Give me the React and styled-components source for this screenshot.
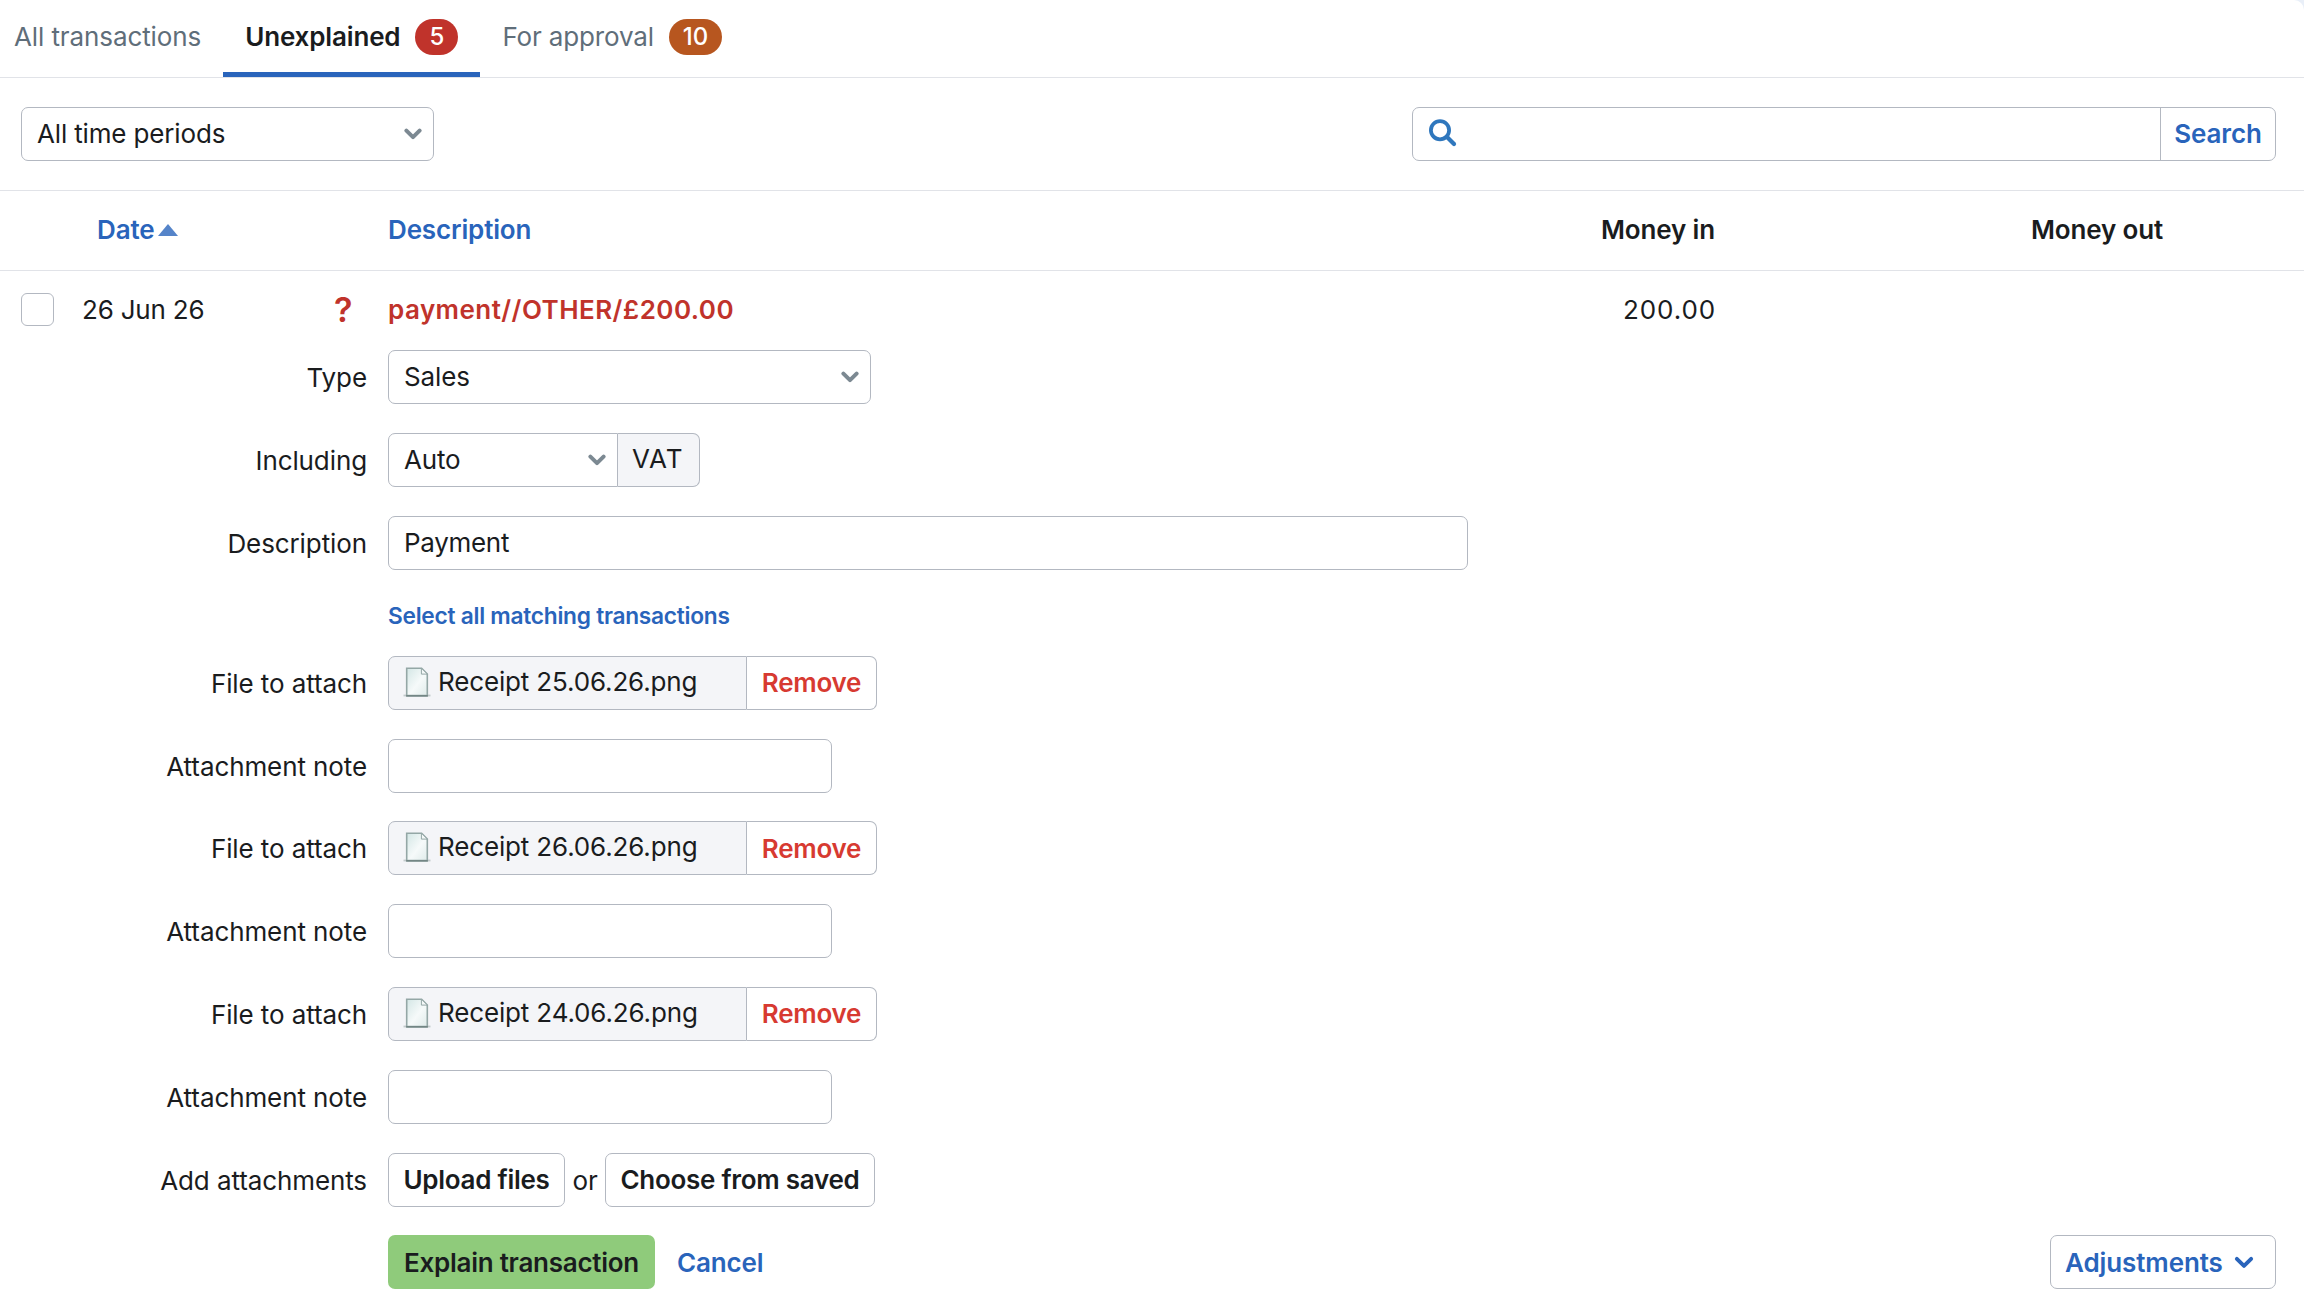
import React from "react";
import styled, { createGlobalStyle } from "styled-components";

const colors = {
  text: "#1a1c1e",
  muted: "#5f6e7a",
  link: "#2964bb",
  danger: "#c0332b",
  remove: "#d73a31",
  amber: "#b7561f",
  green: "#8fcb7b",
  border: "#b3b8c1",
  line: "#e1e3e8",
  fill: "#f4f5f8",
};

const receipts = [
  "Receipt 25.06.26.png",
  "Receipt 26.06.26.png",
  "Receipt 24.06.26.png",
];

const Chevron = ({ color, width = 18, height = 12, stroke = 4 }) => (
  <svg width={width} height={height} viewBox="0 0 18 12" fill="none">
    <path
      d="M2.4 2.6 9 9.1l6.6-6.5"
      stroke={color}
      strokeWidth={stroke}
      strokeLinecap="round"
      strokeLinejoin="round"
    />
  </svg>
);

const SearchIcon = () => (
  <svg width="28" height="28" viewBox="0 0 28 28" fill="none">
    <circle cx="11" cy="11.2" r="9.1" stroke="#2f77bd" strokeWidth="3.8" />
    <path
      d="M18 18l7 7"
      stroke="#2f77bd"
      strokeWidth="4.2"
      strokeLinecap="round"
    />
  </svg>
);

const FileIcon = () => (
  <svg width="28" height="32" viewBox="0 0 28 32">
    <defs>
      <linearGradient id="page" x1="0" y1="0" x2="1" y2="1">
        <stop offset="0" stopColor="#d3e6e5" />
        <stop offset="0.55" stopColor="#f6fafa" />
        <stop offset="1" stopColor="#dfebea" />
      </linearGradient>
    </defs>
    <path d="M0.5 27.6h27v1.8h-27z" fill="#c3cbcc" />
    <path
      d="M3.7 1.2h14.9l5.7 5.8v21.6H3.7z"
      fill="url(#page)"
      stroke="#94a7a6"
      strokeWidth="1.6"
    />
    <path d="M18.4 1.2v5.9h5.9z" fill="#f4f8f8" stroke="#94a7a6" />
    <path d="M3.2 28.8h21.6" stroke="#738685" strokeWidth="1.6" />
  </svg>
);

const AttachmentFields = ({ name }) => (
  <>
    <FormRow>
      <Label>File to attach</Label>
      <Group>
        <FileName>
          <FileIcon />
          <span>{name}</span>
        </FileName>
        <RemoveButton>Remove</RemoveButton>
      </Group>
    </FormRow>
    <FormRow>
      <Label>Attachment note</Label>
      <Input $width={444} aria-label="Attachment note" />
    </FormRow>
  </>
);

const App = () => {
  return (
    <>
      <GlobalStyle />
      <Page>
        <Tabs>
          <Tab>All transactions</Tab>
          <Tab $active>
            Unexplained
            <Badge $color={colors.danger} $width={43}>
              5
            </Badge>
          </Tab>
          <Tab>
            For approval
            <Badge $color={colors.amber} $width={53}>
              10
            </Badge>
          </Tab>
        </Tabs>

        <Toolbar>
          <Select $width={413}>
            All time periods
            <Chevron color="#7c8992" />
          </Select>
          <SearchBox>
            <SearchField>
              <SearchIcon />
              <input aria-label="Search transactions" />
            </SearchField>
            <SearchButton>Search</SearchButton>
          </SearchBox>
        </Toolbar>

        <TableHead>
          <SortLink>
            Date
            <SortArrow width="20" height="12" viewBox="0 0 20 12">
              <path d="M10 0l10 12H0z" fill="#5584c9" />
            </SortArrow>
          </SortLink>
          <SortLink>Description</SortLink>
          <Amount>Money in</Amount>
          <Amount>Money out</Amount>
        </TableHead>

        <TransactionRow>
          <Checkbox />
          <DateCell>26 Jun 26</DateCell>
          <Unknown>?</Unknown>
          <Title>payment//OTHER/£200.00</Title>
          <MoneyIn>200.00</MoneyIn>
        </TransactionRow>

        <Form>
          <FormRow>
            <Label>Type</Label>
            <Select $width={483}>
              Sales
              <Chevron color="#7c8992" />
            </Select>
          </FormRow>
          <FormRow>
            <Label>Including</Label>
            <Group>
              <Select $width={230} $joined>
                Auto
                <Chevron color="#7c8992" />
              </Select>
              <Addon>VAT</Addon>
            </Group>
          </FormRow>
          <FormRow>
            <Label>Description</Label>
            <Input
              $width={1080}
              defaultValue="Payment"
              aria-label="Description"
            />
          </FormRow>

          <MatchingLink>Select all matching transactions</MatchingLink>

          {receipts.map((name) => (
            <AttachmentFields key={name} name={name} />
          ))}

          <FormRow>
            <Label>Add attachments</Label>
            <Button $width={177}>Upload files</Button>
            <Or>or</Or>
            <Button $width={270}>Choose from saved</Button>
          </FormRow>

          <Actions>
            <PrimaryButton>Explain transaction</PrimaryButton>
            <CancelLink>Cancel</CancelLink>
            <Adjustments>
              Adjustments
              <Chevron color={colors.link} width={20} height={13} stroke={3.6} />
            </Adjustments>
          </Actions>
        </Form>
      </Page>
    </>
  );
};

const GlobalStyle = createGlobalStyle`
  *, *::before, *::after {
    box-sizing: border-box;
  }

  body {
    margin: 0;
    background: #e9eff8;
    color: ${colors.text};
    font-family: "Inter", "Liberation Sans", sans-serif;
    font-size: 26px;
    line-height: 32px;
    letter-spacing: -0.15px;
    overflow: hidden;
  }

  svg {
    display: block;
    flex-shrink: 0;
  }

  button, input {
    font: inherit;
    letter-spacing: inherit;
    color: inherit;
  }
`;

const Page = styled.main`
  height: 1312px;
  background: #fff;
  border-radius: 0 10px 0 0;
`;

const Tabs = styled.nav`
  display: flex;
  height: 78px;
  border-bottom: 1px solid ${colors.line};
`;

const Tab = styled.a`
  display: flex;
  align-items: center;
  gap: 15px;
  padding: 2px 22px 0;
  border-bottom: 5px solid
    ${(props) => (props.$active ? colors.link : "transparent")};
  color: ${(props) => (props.$active ? colors.text : colors.muted)};
  font-weight: ${(props) => (props.$active ? 600 : 400)};

  &:first-child {
    padding-left: 14px;
    letter-spacing: -0.1px;
  }
`;

const Badge = styled.span`
  display: flex;
  align-items: center;
  justify-content: center;
  width: ${(props) => props.$width}px;
  height: 36px;
  border-radius: 18px;
  background: ${(props) => props.$color};
  color: #fff;
  font-size: 24px;
  font-weight: 500;
`;

const Toolbar = styled.div`
  display: flex;
  justify-content: space-between;
  height: 113px;
  padding: 29px 28px 0 21px;
  border-bottom: 1px solid ${colors.line};
`;

const Select = styled.div`
  display: flex;
  align-items: center;
  justify-content: space-between;
  width: ${(props) => props.$width}px;
  height: 54px;
  padding: 0 11px 0 15px;
  border: 1px solid ${colors.border};
  border-radius: ${(props) => (props.$joined ? "7px 0 0 7px" : "7px")};
  background: #fff;
`;

const SearchBox = styled.div`
  display: flex;
  width: 864px;
  height: 54px;
  border: 1px solid ${colors.border};
  border-radius: 7px;
`;

const SearchField = styled.label`
  display: flex;
  flex: 1;
  align-items: flex-start;
  padding: 11px 0 0 16px;

  input {
    flex: 1;
    border: 0;
    outline: 0;
    background: none;
  }
`;

const SearchButton = styled.button`
  width: 115px;
  padding: 0;
  border: 0;
  border-left: 1px solid ${colors.border};
  background: none;
  color: ${colors.link};
  font-weight: 560;
`;

const TableHead = styled.div`
  display: grid;
  grid-template-columns: 291px 1fr 400px 448px;
  align-items: center;
  height: 80px;
  padding: 0 141px 2px 97px;
  border-bottom: 1px solid ${colors.line};
  font-weight: 600;
`;

const SortLink = styled.a`
  display: flex;
  align-items: center;
  gap: 4px;
  color: ${colors.link};
`;

const SortArrow = styled.svg`
  margin-top: 1px;
`;

const Amount = styled.span`
  text-align: right;
`;

const TransactionRow = styled.div`
  display: grid;
  grid-template-columns: 61px 252px 54px 1fr 400px;
  align-items: center;
  height: 79px;
  padding: 0 588px 2px 21px;
`;

const Checkbox = styled.span`
  width: 33px;
  height: 33px;
  border: 1px solid ${colors.border};
  border-radius: 6px;
`;

const DateCell = styled.span`
  letter-spacing: -0.2px;
`;

const Unknown = styled.span`
  color: ${colors.danger};
  font-size: 34px;
  font-weight: 600;
`;

const Title = styled.span`
  color: ${colors.danger};
  font-weight: 600;
  letter-spacing: 0.45px;
`;

const MoneyIn = styled.span`
  text-align: right;
  letter-spacing: 0.9px;
`;

const Form = styled.form`
  display: flex;
  flex-direction: column;
`;

const FormRow = styled.div`
  display: flex;
  align-items: center;
  height: 54px;
  margin-bottom: 28.8px;
`;

const Label = styled.label`
  width: 388px;
  padding: 2px 21px 0 0;
  text-align: right;
  letter-spacing: -0.1px;
`;

const Group = styled.div`
  display: flex;
`;

const Input = styled.input`
  width: ${(props) => props.$width}px;
  height: 54px;
  padding: 0 15px;
  border: 1px solid ${colors.border};
  border-radius: 7px;
  background: #fff;
  outline: 0;
  letter-spacing: -0.3px;
`;

const Addon = styled.span`
  width: 82px;
  height: 54px;
  padding: 9px 0 0 14px;
  border: 1px solid ${colors.border};
  border-left: 0;
  border-radius: 0 7px 7px 0;
  background: ${colors.fill};
  letter-spacing: 0.9px;
`;

const MatchingLink = styled.a`
  height: 57.4px;
  padding: 2px 0 0 388px;
  color: ${colors.link};
  font-size: 22.7px;
  font-weight: 600;
  letter-spacing: -0.25px;
`;

const FileName = styled.span`
  display: flex;
  width: 359px;
  height: 54px;
  padding: 9px 0 0 14px;
  border: 1px solid ${colors.border};
  border-radius: 7px 0 0 7px;
  background: ${colors.fill};

  svg {
    margin: 1px 7px 0 0;
  }
`;

const Button = styled.button`
  width: ${(props) => props.$width}px;
  height: 54px;
  padding: 0;
  border: 1px solid ${colors.border};
  border-radius: 7px;
  background: #fff;
  font-weight: 600;
  letter-spacing: -0.27px;
`;

const RemoveButton = styled(Button)`
  width: 130px;
  padding-top: 1px;
  border-left: 0;
  border-radius: 0 7px 7px 0;
  color: ${colors.remove};
  font-weight: 560;
`;

const Or = styled.span`
  width: 40px;
  padding-top: 2px;
  text-align: center;
`;

const Actions = styled.div`
  display: flex;
  align-items: center;
  height: 54px;
  padding: 0 28px 0 388px;
`;

const PrimaryButton = styled(Button)`
  width: 267px;
  padding-top: 1px;
  border: 0;
  background: ${colors.green};
`;

const CancelLink = styled.a`
  margin-left: 22px;
  padding-top: 1px;
  color: ${colors.link};
  font-weight: 560;
`;

const Adjustments = styled(Button)`
  display: flex;
  align-items: center;
  justify-content: space-between;
  width: 226px;
  margin-left: auto;
  padding: 1px 21px 0 14px;
  color: ${colors.link};
  font-weight: 560;
  letter-spacing: -0.1px;
`;

export default App;
